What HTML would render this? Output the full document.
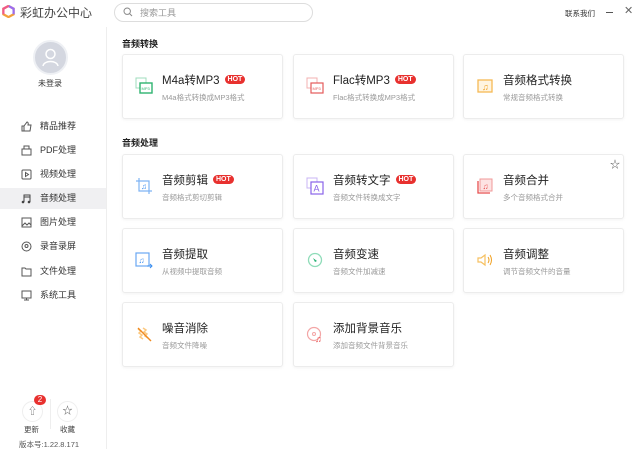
<!DOCTYPE html>
<html><head><meta charset="utf-8"><style>
*{margin:0;padding:0;box-sizing:border-box}
body{width:640px;height:449px;overflow:hidden;background:#fff;font-family:"Liberation Sans","Noto Sans CJK SC",sans-serif;color:#333;position:relative}
.a{position:absolute}
.side{left:0;top:27px;width:107px;height:422px;border-right:1px solid #eee}
.nav{left:0;width:106px;height:21px;font-size:9px;color:#333;line-height:21px}
.nav span{position:absolute;left:40px}
.nav svg{position:absolute;left:21px;top:5px}
.card{width:161px;height:65px;border:1px solid #ececec;border-radius:3px;box-shadow:0 1px 3px rgba(0,0,0,.05);background:#fff}
.card .t{position:absolute;left:39px;top:17px;font-size:11.5px;color:#222;white-space:nowrap}
.card .d{position:absolute;left:39px;top:37px;font-size:7.5px;color:#999;white-space:nowrap}
.hot{display:inline-block;background:#e8312f;color:#fff;font-size:7px;font-weight:bold;border-radius:6px;padding:0 3px;line-height:9px;vertical-align:3px;margin-left:5px}
.card svg{position:absolute;left:12px;top:22px}
.sec{font-size:9px;font-weight:bold;color:#222}
</style></head><body>
<svg class="a" style="left:2px;top:5px" width="13" height="13" viewBox="0 0 14 14"><path d="M7 1L12.5 4V10L7 13L1.5 10V4Z" fill="none" stroke="#f3a13b" stroke-width="2.4"/><path d="M7 1L12.5 4V10" fill="none" stroke="#9b6cf0" stroke-width="2.4"/><path d="M1.5 10V4L7 1" fill="none" stroke="#f05a8a" stroke-width="2.4"/></svg>
<div class="a" style="left:20px;top:4px;font-size:12px;color:#444">彩虹办公中心</div>
<div class="a" style="left:114px;top:3px;width:199px;height:19px;border:1px solid #ddd;border-radius:10px"></div>
<svg class="a" style="left:123px;top:7px" width="10" height="10" viewBox="0 0 10 10"><circle cx="4.2" cy="4.2" r="3.2" fill="none" stroke="#888" stroke-width="1"/><path d="M6.6 6.6L9 9" stroke="#888"/></svg>
<div class="a" style="left:140px;top:6px;font-size:9px;color:#999">搜索工具</div>
<div class="a" style="left:565px;top:8px;font-size:7.5px;color:#333">联系我们</div>
<div class="a" style="left:606px;top:12px;width:7px;height:1px;background:#555"></div>
<div class="a" style="left:624px;top:4px;font-size:11px;color:#666">✕</div>

<div class="a side"></div>
<div class="a" style="left:33px;top:40px;width:35px;height:35px;border-radius:50%;background:#d4d7e0;border:2px solid #eef0f4"></div>
<svg class="a" style="left:38px;top:45px" width="25" height="25" viewBox="0 0 25 25"><circle cx="12.5" cy="9" r="4.5" fill="none" stroke="#fff" stroke-width="1.5"/><path d="M5 21C6 15 19 15 20 21" fill="none" stroke="#fff" stroke-width="1.5"/></svg>
<div class="a" style="left:38px;top:78px;font-size:8px;color:#333">未登录</div>

<div class="a nav" style="top:116px"><svg width="11" height="11"><path d="M1 5h2v5H1zM3 5l3-4c1 0 1.5 1 1 3h3l-1 6H3" fill="none" stroke="#555"/></svg><span>精品推荐</span></div>
<div class="a nav" style="top:140px"><svg width="11" height="11"><rect x="1" y="4" width="9" height="6" fill="none" stroke="#555"/><path d="M3 4V1h5v3" fill="none" stroke="#555"/></svg><span>PDF处理</span></div>
<div class="a nav" style="top:164px"><svg width="11" height="11"><rect x="1" y="1" width="9" height="9" rx="1" fill="none" stroke="#555"/><path d="M4.5 3.5v4l3-2z" fill="none" stroke="#555"/></svg><span>视频处理</span></div>
<div class="a nav" style="top:188px;background:#f0f0f2"><svg width="11" height="11"><path d="M3 9V2h6v7M3 4h6" fill="none" stroke="#444"/><circle cx="2" cy="9" r="1.3" fill="#444"/><circle cx="8" cy="9" r="1.3" fill="#444"/></svg><span>音频处理</span></div>
<div class="a nav" style="top:212px"><svg width="11" height="11"><rect x="1" y="1" width="9" height="9" fill="none" stroke="#555"/><path d="M1 9l3-3 2 2 2-2 2 2" fill="none" stroke="#555"/></svg><span>图片处理</span></div>
<div class="a nav" style="top:236px"><svg width="11" height="11"><circle cx="5.5" cy="5.5" r="4.5" fill="none" stroke="#555"/><circle cx="5.5" cy="5" r="1.5" fill="none" stroke="#555"/></svg><span>录音录屏</span></div>
<div class="a nav" style="top:261px"><svg width="11" height="11"><path d="M1 2h3l1 1h5v7H1z" fill="none" stroke="#555"/></svg><span>文件处理</span></div>
<div class="a nav" style="top:285px"><svg width="11" height="11"><rect x="1" y="1" width="9" height="7" fill="none" stroke="#555"/><path d="M5.5 8v2M3 10h5" stroke="#555"/></svg><span>系统工具</span></div>

<div class="a" style="left:22px;top:401px;width:21px;height:21px;border-radius:50%;border:1px solid #eee"></div>
<div class="a" style="left:28px;top:404px;font-size:9px;color:#666">⇧</div>
<div class="a" style="left:34px;top:395px;width:12px;height:10px;border-radius:5px;background:#e8312f;color:#fff;font-size:8px;line-height:10px;text-align:center">2</div>
<div class="a" style="left:24px;top:424px;font-size:7.5px;color:#444">更新</div>
<div class="a" style="left:57px;top:401px;width:21px;height:21px;border-radius:50%;border:1px solid #eee;text-align:center;font-size:10px;line-height:19px;color:#555">☆</div>
<div class="a" style="left:60px;top:424px;font-size:7.5px;color:#444">收藏</div>
<div class="a" style="left:50px;top:399px;width:1px;height:30px;background:#eee"></div>
<div class="a" style="left:19px;top:439px;font-size:7.5px;color:#555">版本号:1.22.8.171</div>

<div class="a sec" style="left:122px;top:37px">音频转换</div>
<div class="a sec" style="left:122px;top:136px">音频处理</div>

<div class="a card" style="left:122px;top:54px"><svg width="18" height="18"><rect x="1" y="1" width="10" height="10" fill="none" stroke="#9fdcbc"/><rect x="5" y="6" width="12" height="10" fill="#fff" stroke="#2fb470" stroke-width="1.4"/><text x="6.5" y="13" font-size="4" fill="#2fb470" font-family="Liberation Sans">MP3</text></svg><div class="t">M4a转MP3<span class="hot">HOT</span></div><div class="d">M4a格式转换成MP3格式</div></div>
<div class="a card" style="left:293px;top:54px"><svg width="18" height="18"><rect x="1" y="1" width="10" height="10" fill="none" stroke="#f3b0b0"/><rect x="5" y="6" width="12" height="10" fill="#fff" stroke="#e45b5b" stroke-width="1.2"/><text x="6.5" y="13" font-size="4" fill="#e45b5b" font-family="Liberation Sans">MP3</text></svg><div class="t">Flac转MP3<span class="hot">HOT</span></div><div class="d">Flac格式转换成MP3格式</div></div>
<div class="a card" style="left:463px;top:54px"><svg width="18" height="18"><rect x="2" y="3" width="14" height="12" fill="#fff4e0" stroke="#f6b955" stroke-width="1.3"/><text x="6" y="13" font-size="9" fill="#f0a020">♫</text></svg><div class="t">音频格式转换</div><div class="d">常规音频格式转换</div></div>

<div class="a card" style="left:122px;top:154px"><svg width="18" height="18"><path d="M4 1v13h13M1 4h13v13" fill="none" stroke="#7fb4f4" stroke-width="1.2"/><text x="6" y="12" font-size="8" fill="#3b8ef0">♫</text></svg><div class="t">音频剪辑<span class="hot">HOT</span></div><div class="d">音频格式剪切剪辑</div></div>
<div class="a card" style="left:293px;top:154px"><svg width="18" height="18"><rect x="1" y="1" width="10" height="10" fill="none" stroke="#c8b4f4"/><rect x="5" y="5" width="12" height="12" fill="#fff" stroke="#8a63e8" stroke-width="1.2"/><text x="7.5" y="14.5" font-size="9" fill="#8a63e8" font-family="Liberation Sans">A</text></svg><div class="t">音频转文字<span class="hot">HOT</span></div><div class="d">音频文件转换成文字</div></div>
<div class="a card" style="left:463px;top:154px"><div class="a" style="right:3px;top:1px;font-size:10px;color:#555">☆</div><svg width="18" height="18"><path d="M2 4v12h12" fill="none" stroke="#e84e4e" stroke-width="1.3"/><rect x="4" y="2" width="12" height="12" fill="#fde3e3" stroke="#f09a9a"/><text x="6.5" y="12" font-size="8" fill="#e84e4e">♫</text></svg><div class="t">音频合并</div><div class="d">多个音频格式合并</div></div>

<div class="a card" style="left:122px;top:228px"><svg width="18" height="18"><rect x="1" y="2" width="13" height="13" fill="none" stroke="#6aa8f2" stroke-width="1.2"/><text x="3.5" y="12" font-size="8" fill="#3b8ef0">♫</text><path d="M12 15h5M15 13l2 2-2 2" fill="none" stroke="#3b8ef0"/></svg><div class="t">音频提取</div><div class="d">从视频中提取音频</div></div>
<div class="a card" style="left:293px;top:228px"><svg width="18" height="18"><circle cx="9" cy="9" r="6.5" fill="none" stroke="#8fdcb9" stroke-width="1.3"/><path d="M7 7l4 3-2 1z" fill="#26b073"/></svg><div class="t">音频变速</div><div class="d">音频文件加减速</div></div>
<div class="a card" style="left:463px;top:228px"><svg width="18" height="18"><path d="M2 7h3l4-3v10l-4-3H2z" fill="none" stroke="#f6c060" stroke-width="1.2"/><path d="M12 6q2 3 0 6M14 4q3 5 0 10" fill="none" stroke="#f0a020"/></svg><div class="t">音频调整</div><div class="d">调节音频文件的音量</div></div>

<div class="a card" style="left:122px;top:302px"><svg width="18" height="18"><path d="M3 4l3 2-2 2 3 2-2 2 3 2M8 3l3 2-2 2 3 2-2 2 3 2" fill="none" stroke="#fbc880" stroke-width="1.5"/><path d="M3 3l13 13" stroke="#f08a20" stroke-width="1.4"/></svg><div class="t">噪音消除</div><div class="d">音频文件降噪</div></div>
<div class="a card" style="left:293px;top:302px"><svg width="18" height="18"><circle cx="8" cy="9" r="6.5" fill="none" stroke="#f3a5a5" stroke-width="1.2"/><circle cx="8" cy="9" r="1.5" fill="none" stroke="#f3a5a5"/><text x="9" y="17" font-size="9" fill="#e84e4e">♫</text></svg><div class="t">添加背景音乐</div><div class="d">添加音频文件背景音乐</div></div>
</body></html>
